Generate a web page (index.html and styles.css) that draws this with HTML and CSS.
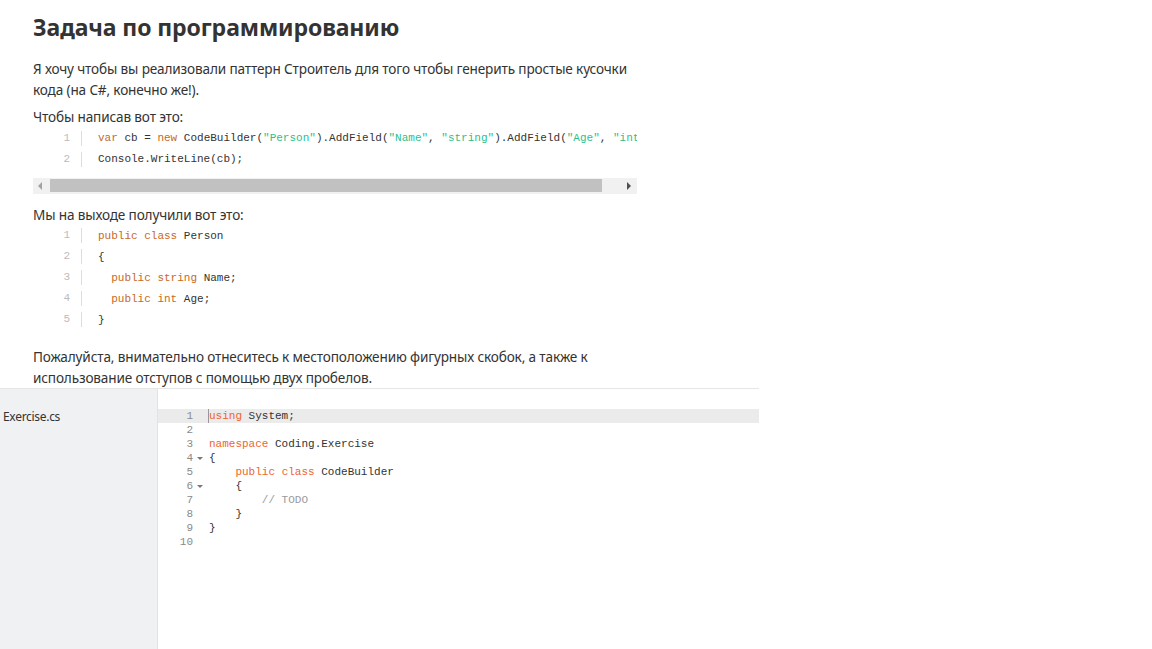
FILE: index.html
```html
<!DOCTYPE html>
<html lang="ru">
<head>
<meta charset="utf-8">
<title>Задача</title>
<link rel="stylesheet" href="styles.css">
</head>
<body>
<div class="page">
  <section class="task">
    <h1 class="title">Задача по программированию</h1>
    <p class="para">Я хочу чтобы вы реализовали паттерн Строитель для того чтобы генерить простые кусочки кода (на C#, конечно же!).</p>
    <p class="para tight">Чтобы написав вот это:</p>
    <div class="code scroll">
      <div class="row"><span class="ln">1</span><span class="src"><span class="kw">var</span> cb = <span class="kw">new</span> CodeBuilder(<span class="str">"Person"</span>).AddField(<span class="str">"Name"</span>, <span class="str">"string"</span>).AddField(<span class="str">"Age"</span>, <span class="str">"int"</span>);</span></div>
      <div class="row"><span class="ln">2</span><span class="src">Console.WriteLine(cb);</span></div>
    </div>
    <div class="hbar">
      <span class="arrow left"></span>
      <span class="thumb"></span>
      <span class="arrow right"></span>
    </div>
    <p class="para after-bar">Мы на выходе получили вот это:</p>
    <div class="code">
      <div class="row"><span class="ln">1</span><span class="src"><span class="kw">public</span> <span class="kw">class</span> Person</span></div>
      <div class="row"><span class="ln">2</span><span class="src">{</span></div>
      <div class="row"><span class="ln">3</span><span class="src">  <span class="kw">public</span> <span class="kw">string</span> Name;</span></div>
      <div class="row"><span class="ln">4</span><span class="src">  <span class="kw">public</span> <span class="kw">int</span> Age;</span></div>
      <div class="row"><span class="ln">5</span><span class="src">}</span></div>
    </div>
    <p class="para last">Пожалуйста, внимательно отнеситесь к местоположению фигурных скобок, а также к использование отступов с помощью двух пробелов.</p>
  </section>
  <section class="workspace">
    <aside class="files">
      <div class="file">Exercise.cs</div>
    </aside>
    <div class="editor">
      <div class="eline active"><span class="gut">1</span><span class="etext"><span class="cursor"></span><span class="ek">using</span> System;</span></div>
      <div class="eline"><span class="gut">2</span><span class="etext"></span></div>
      <div class="eline"><span class="gut">3</span><span class="etext"><span class="ek">namespace</span> Coding.Exercise</span></div>
      <div class="eline"><span class="gut fold">4</span><span class="etext">{</span></div>
      <div class="eline"><span class="gut">5</span><span class="etext">    <span class="ek">public</span> <span class="ek">class</span> CodeBuilder</span></div>
      <div class="eline"><span class="gut fold">6</span><span class="etext">    {</span></div>
      <div class="eline"><span class="gut">7</span><span class="etext">        <span class="cm">// TODO</span></span></div>
      <div class="eline"><span class="gut">8</span><span class="etext">    }</span></div>
      <div class="eline"><span class="gut">9</span><span class="etext">}</span></div>
      <div class="eline"><span class="gut">10</span><span class="etext"></span></div>
    </div>
  </section>
</div>
</body>
</html>
```

FILE: styles.css
```css
html, body {
  margin: 0;
  padding: 0;
  background: #ffffff;
}

body {
  font-family: "Segoe UI", "Noto Sans", "Open Sans", sans-serif;
  color: #333333;
}

.page {
  width: 759px;
  min-height: 100vh;
  display: flex;
  flex-direction: column;
}

.task {
  padding: 0 122px 0 33px;
}

.title {
  margin: 11px 0 0 0;
  font-size: 23px;
  font-weight: 700;
  line-height: 32px;
  color: #333333;
  letter-spacing: -0.1px;
}

.para {
  margin: 16px 0 0 0;
  font-size: 13.6px;
  line-height: 20.5px;
  letter-spacing: -0.15px;
}

.para.tight {
  margin-top: 7px;
}

.para.after-bar {
  margin-top: 11px;
}

.para.last {
  margin-top: 17px;
  margin-bottom: 0;
}

.code {
  font-family: "Liberation Mono", "DejaVu Sans Mono", monospace;
  font-size: 11px;
  overflow: hidden;
  white-space: pre;
  display: flex;
  flex-direction: column;
}

.row {
  display: flex;
  align-items: center;
  height: 21px;
}

.ln {
  width: 37px;
  flex: none;
  text-align: right;
  padding-right: 11px;
  margin-right: 16px;
  border-right: 1px solid #dddddd;
  color: #bbbbbb;
  line-height: 15px;
}

.src {
  color: #333333;
}

.kw {
  color: #c7691f;
}

.str {
  color: #2cbf8e;
}

.hbar {
  margin-top: 8px;
  height: 16px;
  background: #f1f1f1;
  display: flex;
  align-items: center;
}

.arrow {
  width: 0;
  height: 0;
  border-top: 4px solid transparent;
  border-bottom: 4px solid transparent;
  flex: none;
}

.arrow.left {
  border-right: 4px solid #a3a3a3;
  margin: 0 8px 0 5px;
}

.arrow.right {
  border-left: 4px solid #505050;
  margin: 0 6px 0 25px;
}

.thumb {
  height: 13px;
  flex: 1;
  background: #c1c1c1;
}

.workspace {
  margin-top: 0;
  border-top: 1px solid #e6e6e6;
  display: flex;
  flex: 1;
}

.files {
  width: 157px;
  flex: none;
  background: #f0f1f3;
  border-right: 1px solid #e2e3e5;
  padding-top: 20px;
}

.file {
  font-size: 12px;
  line-height: 16px;
  padding-left: 3px;
  color: #333333;
  letter-spacing: -0.3px;
}

.editor {
  flex: 1;
  padding-top: 20px;
  font-family: "Liberation Mono", "DejaVu Sans Mono", monospace;
  font-size: 11px;
  white-space: pre;
  display: flex;
  flex-direction: column;
}

.eline {
  display: flex;
  height: 14px;
  line-height: 14px;
}

.eline.active {
  background: #ebebeb;
}

.gut {
  width: 35px;
  flex: none;
  text-align: right;
  padding-right: 16px;
  color: #8a8a8a;
  position: relative;
}

.gut.fold::after {
  content: "";
  position: absolute;
  right: 6px;
  top: 6px;
  border-left: 3px solid transparent;
  border-right: 3px solid transparent;
  border-top: 3px solid #777777;
}

.etext {
  color: #333333;
  position: relative;
}

.ek {
  color: #f0642c;
}

.cm {
  color: #9a9a9a;
}

.cursor {
  position: absolute;
  left: -1px;
  top: 0;
  width: 1px;
  height: 14px;
  background: #999999;
}
```
